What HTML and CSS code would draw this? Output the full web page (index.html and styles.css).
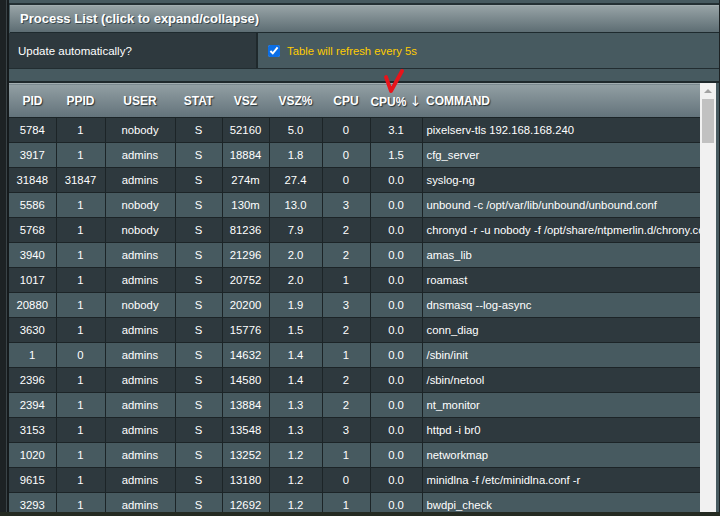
FILE: index.html
```html
<!DOCTYPE html>
<html>
<head>
<meta charset="utf-8">
<link rel="stylesheet" href="styles.css">
</head>
<body>
<div class="frame">
  <div class="topstrip"></div>
  <div class="title">Process List (click to expand/collapse)</div>
  <div class="settings">
    <div class="set-label">Update automatically?</div>
    <div class="set-value"><input type="checkbox" checked class="chk"><span class="refresh">Table will refresh every 5s</span></div>
  </div>
  <div class="spacer"></div>
  <div class="tablewrap">
    <div class="tablearea">
      <table class="proc">
        <colgroup>
          <col class="c-pid"><col class="c-ppid"><col class="c-user"><col class="c-stat"><col class="c-vsz"><col class="c-vszp"><col class="c-cpu"><col class="c-cpup"><col class="c-cmd">
        </colgroup>
        <thead>
          <tr><th>PID</th><th>PPID</th><th>USER</th><th>STAT</th><th>VSZ</th><th>VSZ%</th><th>CPU</th><th class="sorted">CPU% <span class="arrow">↓</span><svg class="redcheck" width="22" height="24" viewBox="0 0 22 24"><path d="M3 8 L8 22 L19 2" fill="none" stroke="#e8141b" stroke-width="3.8" stroke-linecap="round" stroke-linejoin="round"/></svg></th><th class="cmdh">COMMAND</th></tr>
        </thead>
        <tbody>
          <tr><td>5784</td><td>1</td><td>nobody</td><td>S</td><td>52160</td><td>5.0</td><td>0</td><td>3.1</td><td class="cmd">pixelserv-tls 192.168.168.240</td></tr>
          <tr><td>3917</td><td>1</td><td>admins</td><td>S</td><td>18884</td><td>1.8</td><td>0</td><td>1.5</td><td class="cmd">cfg_server</td></tr>
          <tr><td>31848</td><td>31847</td><td>admins</td><td>S</td><td>274m</td><td>27.4</td><td>0</td><td>0.0</td><td class="cmd">syslog-ng</td></tr>
          <tr><td>5586</td><td>1</td><td>nobody</td><td>S</td><td>130m</td><td>13.0</td><td>3</td><td>0.0</td><td class="cmd">unbound -c /opt/var/lib/unbound/unbound.conf</td></tr>
          <tr><td>5768</td><td>1</td><td>nobody</td><td>S</td><td>81236</td><td>7.9</td><td>2</td><td>0.0</td><td class="cmd">chronyd -r -u nobody -f /opt/share/ntpmerlin.d/chrony.conf</td></tr>
          <tr><td>3940</td><td>1</td><td>admins</td><td>S</td><td>21296</td><td>2.0</td><td>2</td><td>0.0</td><td class="cmd">amas_lib</td></tr>
          <tr><td>1017</td><td>1</td><td>admins</td><td>S</td><td>20752</td><td>2.0</td><td>1</td><td>0.0</td><td class="cmd">roamast</td></tr>
          <tr><td>20880</td><td>1</td><td>nobody</td><td>S</td><td>20200</td><td>1.9</td><td>3</td><td>0.0</td><td class="cmd">dnsmasq --log-async</td></tr>
          <tr><td>3630</td><td>1</td><td>admins</td><td>S</td><td>15776</td><td>1.5</td><td>2</td><td>0.0</td><td class="cmd">conn_diag</td></tr>
          <tr><td>1</td><td>0</td><td>admins</td><td>S</td><td>14632</td><td>1.4</td><td>1</td><td>0.0</td><td class="cmd">/sbin/init</td></tr>
          <tr><td>2396</td><td>1</td><td>admins</td><td>S</td><td>14580</td><td>1.4</td><td>2</td><td>0.0</td><td class="cmd">/sbin/netool</td></tr>
          <tr><td>2394</td><td>1</td><td>admins</td><td>S</td><td>13884</td><td>1.3</td><td>2</td><td>0.0</td><td class="cmd">nt_monitor</td></tr>
          <tr><td>3153</td><td>1</td><td>admins</td><td>S</td><td>13548</td><td>1.3</td><td>3</td><td>0.0</td><td class="cmd">httpd -i br0</td></tr>
          <tr><td>1020</td><td>1</td><td>admins</td><td>S</td><td>13252</td><td>1.2</td><td>1</td><td>0.0</td><td class="cmd">networkmap</td></tr>
          <tr><td>9615</td><td>1</td><td>admins</td><td>S</td><td>13180</td><td>1.2</td><td>0</td><td>0.0</td><td class="cmd">minidlna -f /etc/minidlna.conf -r</td></tr>
          <tr><td>3293</td><td>1</td><td>admins</td><td>S</td><td>12692</td><td>1.2</td><td>1</td><td>0.0</td><td class="cmd">bwdpi_check</td></tr>
        </tbody>
      </table>
    </div>
    <div class="scrollbar">
      <div class="sb-up"></div>
      <div class="sb-thumb"></div>
      <div class="sb-track"></div>
    </div>
  </div>
</div>
<div class="bottom"></div>
</body>
</html>
```
FILE: styles.css
```css
html, body {
  margin: 0;
  padding: 0;
}
body {
  width: 720px;
  height: 516px;
  overflow: hidden;
  background: #1d2224;
  font-family: "Liberation Sans", Arial, sans-serif;
  color: #fff;
}
.frame {
  margin-left: 7px;
  width: 710px;
  height: 512px;
  background: #475a60;
  border-left: 2px solid #151a1c;
  box-shadow: -1px 0 0 #3a4347;
  display: flex;
  flex-direction: column;
  overflow: hidden;
}
.topstrip {
  height: 3px;
  border-bottom: 2px solid #243034;
  background: #475a60;
  flex: none;
}
.title {
  flex: none;
  height: 26px;
  line-height: 26px;
  padding-left: 10px;
  font-size: 13px;
  font-weight: bold;
  text-shadow: 1px 1px 0 #3b4a4f;
  background: linear-gradient(#97a3a6, #5d6d73);
  border-top: 1px solid #a3aeb1;
  border-bottom: 1px solid #1e2a2e;
  margin-left: 1px;
}
.settings {
  flex: none;
  display: flex;
  height: 35px;
  border-bottom: 1px solid #222d31;
}
.set-label {
  width: 238px;
  flex: none;
  padding-left: 9px;
  background: #2e393e;
  border-right: 2px solid #1f292c;
  display: flex;
  align-items: center;
  font-size: 11.5px;
}
.set-value {
  flex: 1;
  background: #475a60;
  display: flex;
  align-items: center;
  padding-left: 10px;
  font-size: 11.3px;
}
.chk {
  margin: 0 7px 0 0;
  width: 12px;
  height: 12px;
  accent-color: #0b6ee6;
}
.refresh {
  color: #ffcc00;
}
.spacer {
  flex: none;
  height: 12px;
  border-bottom: 2px solid #1e282b;
}
.tablewrap {
  flex: 1;
  display: flex;
  min-height: 0;
}
.tablearea {
  width: 691px;
  flex: none;
}
.proc {
  border-collapse: collapse;
  table-layout: fixed;
  width: 691px;
  font-size: 11.3px;
}
.c-pid { width: 47px; }
.c-ppid { width: 49px; }
.c-user { width: 70px; }
.c-stat { width: 47px; }
.c-vsz { width: 47px; }
.c-vszp { width: 53px; }
.c-cpu { width: 48px; }
.c-cpup { width: 52px; }
.c-cmd { width: 278px; }
.proc thead th {
  height: 33px;
  padding: 0;
  font-size: 12px;
  font-weight: bold;
  text-shadow: 1px 1px 1px #2a3539;
  background: linear-gradient(#929fa3, #62727a);
  border-top: 1px solid #a3aeb1;
  border-bottom: 1px solid #1b2427;
  white-space: nowrap;
}
.proc thead th.sorted {
  position: relative;
}
.arrow {
  font-size: 14px;
  font-weight: normal;
  font-family: "DejaVu Sans", sans-serif;
}
.redcheck {
  position: absolute;
  left: 13px;
  top: -15px;
}
.proc thead th.cmdh {
  text-align: left;
  padding-left: 4px;
}
.proc tbody td {
  height: 24px;
  padding: 0;
  text-align: center;
  border: 1px solid #1c2427;
  white-space: nowrap;
  overflow: hidden;
}
.proc tbody td.cmd {
  text-align: left;
  padding-left: 4px;
}
.proc tbody tr:nth-child(odd) td {
  background: #2e393e;
}
.proc tbody tr:nth-child(even) td {
  background: #475a60;
}
.proc tbody tr td:first-child {
  border-left: none;
}
.scrollbar {
  width: 16px;
  flex: none;
  display: flex;
  flex-direction: column;
  background: #f1f1f1;
}
.sb-up {
  height: 16px;
  flex: none;
  position: relative;
}
.sb-up::after {
  content: "";
  position: absolute;
  left: 4px;
  top: 6px;
  border-left: 4px solid transparent;
  border-right: 4px solid transparent;
  border-bottom: 4px solid #a3a3a3;
}
.sb-thumb {
  height: 44px;
  flex: none;
  margin: 0 2px;
  background: #c1c1c1;
}
.sb-track {
  flex: 1;
}
.bottom {
  height: 4px;
  background: #252b22;
}
```
